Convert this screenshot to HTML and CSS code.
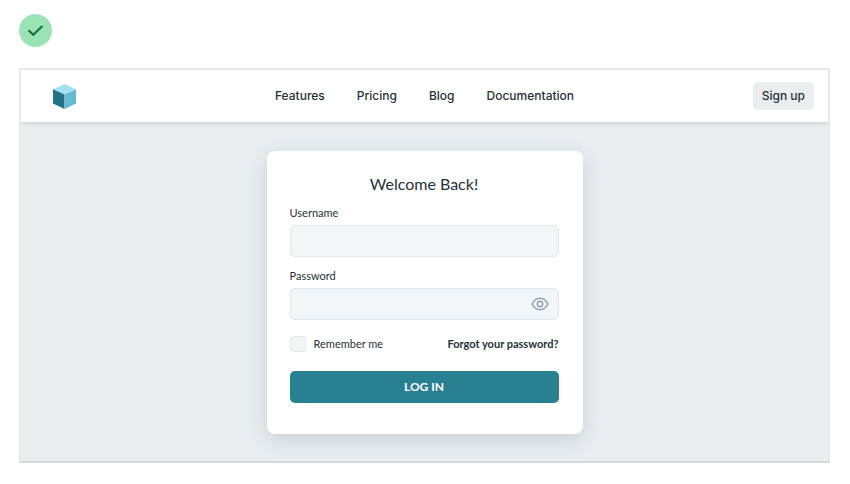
FILE: index.html
```html
<!DOCTYPE html>
<html lang="en">
<head>
<meta charset="utf-8">
<meta name="viewport" content="width=device-width, initial-scale=1">
<title>Log in</title>
<link rel="stylesheet" href="styles.css">
</head>
<body>
<div class="status">
  <svg class="status-icon" viewBox="0 0 33 33" role="img" aria-label="Do">
    <path d="M9.5 16.200l4.800 4.600 9.200-8.800" fill="none" stroke="#17703d" stroke-width="2.200"/>
  </svg>
</div>
<div class="frame">
  <header class="header">
    <a class="logo" href="#" aria-label="Home">
      <svg viewBox="0 0 23 25" width="23" height="25" aria-hidden="true">
        <path d="M11.5 0L23 5.2 11.5 10.5 0 5.2z" fill="#a5e0f0"/>
        <path d="M0 5.2l11.5 5.3V25L0 19.5z" fill="#217389"/>
        <path d="M23 5.2l-11.5 5.3V25L23 19.5z" fill="#63bad2"/>
      </svg>
    </a>
    <nav class="nav">
      <a href="#">Features</a>
      <a href="#">Pricing</a>
      <a href="#">Blog</a>
      <a href="#">Documentation</a>
    </nav>
    <button class="signup" type="button">Sign up</button>
  </header>
  <main class="main">
    <form class="card">
      <h1 class="title">Welcome Back!</h1>
      <div class="field">
        <label for="username">Username</label>
        <input class="input" id="username" type="text">
      </div>
      <div class="field">
        <label for="password">Password</label>
        <div class="password">
          <input class="input" id="password" type="password">
          <button class="reveal" type="button" aria-label="Show password">
            <svg viewBox="0 0 18 14" width="18" height="14" fill="none" stroke="#8fa2ae" stroke-width="1.500" aria-hidden="true">
              <path d="M1 7C3 3.200 5.700 1.300 9 1.300S15 3.200 17 7c-2 3.800-4.700 5.700-8 5.700S3 10.800 1 7z"/>
              <circle cx="9" cy="7" r="2.700"/>
            </svg>
          </button>
        </div>
      </div>
      <div class="options">
        <label class="remember"><input class="check" type="checkbox">Remember me</label>
        <a class="forgot" href="#">Forgot your password?</a>
      </div>
      <button class="login" type="submit">LOG IN</button>
    </form>
  </main>
</div>
</body>
</html>
```
FILE: styles.css
```css
* { box-sizing: border-box; }
body {
  margin: 0;
  padding: 14px 20px 20px 19px;
  background: #fff;
  color: #243238;
  font-family: Lato, "Liberation Sans", sans-serif;
  font-size: 11px;
  line-height: 16px;
}
a { color: inherit; text-decoration: none; }
button { font: inherit; color: inherit; border: 0; cursor: pointer; }
svg { display: block; }

.status-icon {
  width: 33px;
  height: 33px;
  border-radius: 50%;
  background: #9be3b5;
}
.frame {
  margin-top: 21px;
  border: 2px solid #e6e9eb;
  border-bottom-color: #d6dade;
  background: #eaeef1;
}
.header {
  display: grid;
  grid-template-columns: 1fr auto 1fr;
  align-items: center;
  padding: 12px 14px 12px 32px;
  background: #fff;
  box-shadow: 0 2px 4px rgba(45, 65, 85, 0.16);
  clip-path: inset(0 0 -8px);
}
.logo { justify-self: start; }
.nav {
  display: flex;
  gap: 32px;
  margin-left: -18px;
  font-family: Inter, "Liberation Sans", sans-serif;
  font-size: 12px;
  font-weight: 500;
}
.signup {
  justify-self: end;
  padding: 6px 9px;
  border-radius: 5px;
  background: #eaeef1;
  font-family: Inter, "Liberation Sans", sans-serif;
  font-size: 12px;
  font-weight: 500;
}
.main {
  display: flex;
  justify-content: center;
  padding: 29px 16px 27px;
}
.card {
  width: 100%;
  max-width: 316px;
  padding: 20px 24px 31px 23px;
  border-radius: 8px;
  background: #fff;
  box-shadow: 0 6px 20px rgba(45, 65, 85, 0.18);
}
.title {
  margin: 0 0 8px;
  font-size: 16px;
  font-weight: 400;
  line-height: 26px;
  text-align: center;
}
.field {
  display: grid;
  gap: 4px;
  margin-bottom: 11px;
}
.input {
  display: block;
  width: 100%;
  height: 32px;
  padding: 0 10px;
  border: 1px solid #dfe7eb;
  border-radius: 5px;
  background: #f2f6f9;
  font: inherit;
}
.password { position: relative; }
.password .input { padding-right: 36px; }
.reveal {
  position: absolute;
  top: 0;
  right: 0;
  height: 100%;
  padding: 0 10px;
  background: none;
}
.options {
  display: flex;
  align-items: center;
  justify-content: space-between;
  margin: 16px 0 19px;
}
.remember { display: flex; align-items: center; gap: 8px; }
.check {
  appearance: none;
  width: 16px;
  height: 16px;
  margin: 0;
  border: 1px solid #dfe7eb;
  border-radius: 4px;
  background: #f2f6f9;
}
.check:checked { background: #288193; }
.forgot { font-weight: 700; }
.login {
  display: block;
  width: 100%;
  padding: 8px;
  border-radius: 5px;
  background: #288193;
  color: #fff;
  font-size: 12px;
  font-weight: 700;
}
```
